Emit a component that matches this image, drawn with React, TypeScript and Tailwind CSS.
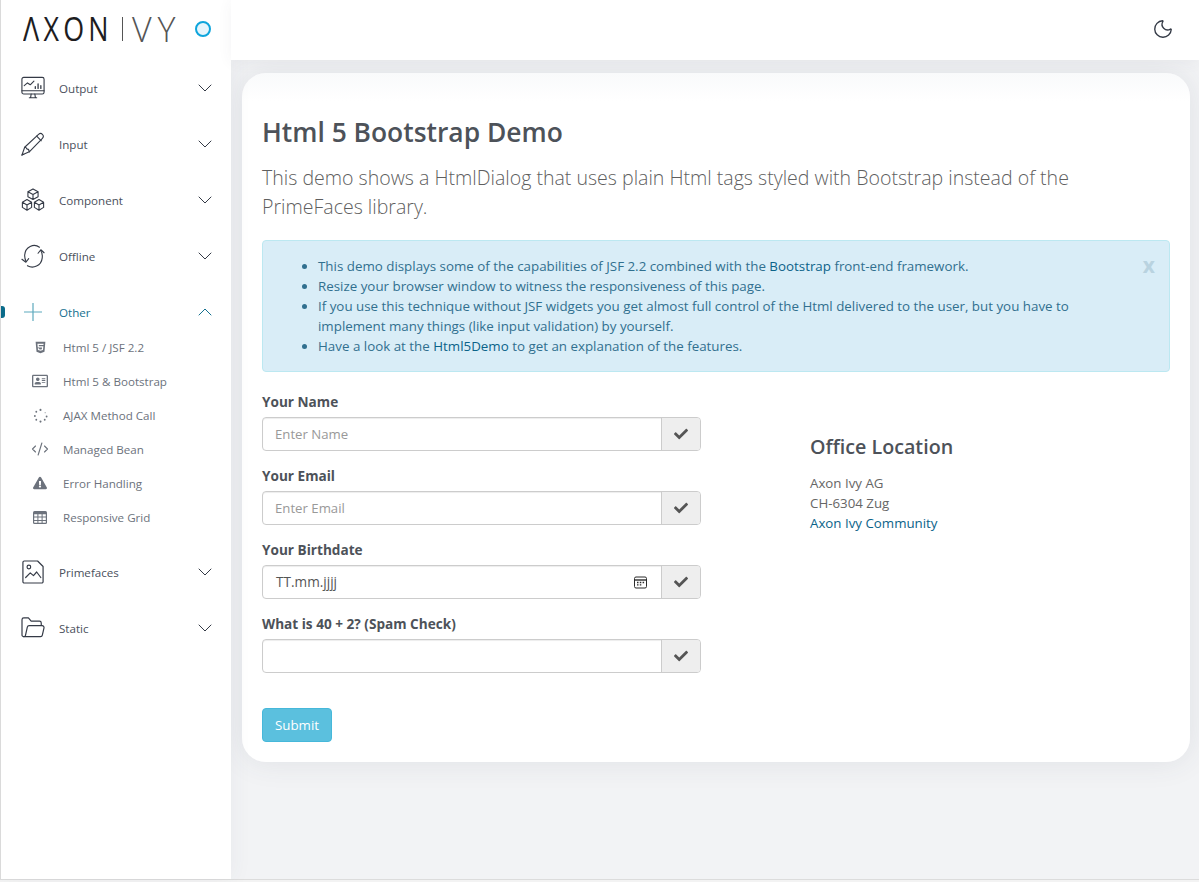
import React from "react";
import { ChevronDown, ChevronUp, CodeXml, Moon } from "lucide-react";
import { FaHtml5, FaRegAddressCard, FaExclamationTriangle, FaCheck } from "react-icons/fa";

/** Line icons of the sidebar */
const base = { fill: "none", stroke: "currentColor", strokeWidth: 1.2, strokeLinecap: "round", strokeLinejoin: "round" } as const;

const MonitorIcon = () => (
  <svg width="24" height="24" viewBox="0 0 26 26" {...base}>
    <rect x="1" y="1.5" width="24" height="18" rx="2" />
    <path d="M1 16h24M9 23.5h8M11 19.5l-.6 4M15 19.5l.6 4" />
    <path d="M3.5 10.5l3.5-3 3 2 4-4" />
    <path d="M15.5 13.5v-2M18.5 13.5v-5M21.5 13.5v-3" strokeWidth="1.4" />
  </svg>
);
const PencilIcon = () => (
  <svg width="24" height="24" viewBox="0 0 26 26" {...base}>
    <path d="M1 25l3-8.5L19 2.500c1.5-1.300 3-1.200 4.200 0 1.200 1.200 1.300 2.900 0 4.300L9 21.500z" />
    <path d="M17 4.500l5 5M4 16.500c1.500 0 2 .5 2.200 1.800 1.300 0 2.500.6 2.800 3.200M1 25l2-.8" />
  </svg>
);
const CubesIcon = () => (
  <svg width="24" height="24" viewBox="0 0 26 26" {...base}>
    <path d="M13 1l5.500 3v5.500L13 12.500 7.500 9.500V4zM7.500 4L13 7l5.500-3M13 7v5.500" />
    <path d="M6.500 12.500l5 3v5.500l-5 3-5-3v-5.500zM1.500 15.500l5 3 5-3M6.500 18.500v5.500" />
    <path d="M19.500 12.500l5 3v5.500l-5 3-5-3v-5.500zM14.500 15.500l5 3 5-3M19.500 18.500v5.500" />
  </svg>
);
const SyncIcon = () => (
  <svg width="24" height="24" viewBox="0 0 26 26" {...base}>
    <path d="M20 3.500C14-1 4.500 3 4 12c-.2 3 .5 5 1.500 7" />
    <path d="M1 16.500l4.300 3.300 3-4" />
    <path d="M7 23.500c6 3.500 15 .5 16-8.500.3-3-.3-6-1.600-8" />
    <path d="M25 9.500l-3.500-3.300-3 3.800" />
  </svg>
);
const PictureIcon = () => (
  <svg width="22" height="24" viewBox="0 0 24 26" {...base} strokeWidth="1.3" className="ml-px">
    <path d="M2.500 1h14.500l6 6v16.500a1.500 1.500 0 0 1-1.500 1.500h-19A1.500 1.500 0 0 1 1 23.500v-21A1.500 1.500 0 0 1 2.500 1z" />
    <circle cx="7.500" cy="7.500" r="2" />
    <path d="M4 19l5-5 3.500 3 3.500-4 4.500 6" />
  </svg>
);
const FolderIcon = () => (
  <svg width="24" height="22" viewBox="0 0 26 24" {...base} strokeWidth="1.3">
    <path d="M3 21.500A2 2 0 0 1 1 19.500V3a2 2 0 0 1 2-2h5l3 3.500h9a2 2 0 0 1 2 2v2.500" />
    <path d="M3 21.500c1 0 1.500-.5 1.800-1.500L6.800 11A2 2 0 0 1 8.800 9.500H23a2 2 0 0 1 2 2.400l-1.800 8A2 2 0 0 1 21.200 21.500z" />
  </svg>
);
const PlusIcon = () => (
  <svg width="18" height="18" viewBox="0 0 18 18" fill="none" stroke="#5da9bd" strokeWidth="1.2">
    <path d="M0 9h18M9 0v18" />
  </svg>
);
const SpinnerIcon = () => (
  <svg width="15" height="15" viewBox="0 0 16 16" fill="#6c727c">
    <circle cx="8" cy="2" r="1.1" />
    <circle cx="3.5" cy="4" r="1" />
    <circle cx="13" cy="5" r=".7" opacity=".6" />
    <circle cx="2" cy="8.500" r="1" />
    <circle cx="14.500" cy="9" r="1" />
    <circle cx="3.500" cy="12.500" r="1" />
    <circle cx="12.500" cy="12.500" r="1" />
    <circle cx="8" cy="14.500" r="1.1" />
  </svg>
);
const GridIcon = () => (
  <svg width="14" height="13" viewBox="0 0 14 13">
    <rect width="14" height="13" rx="1.5" fill="#6c727c" />
    <path d="M1.2 3.200h3.200v2.400H1.200zM5.400 3.200h3.200v2.400H5.400zM9.600 3.200h3.200v2.400H9.600zM1.200 6.600h3.200V9H1.200zM5.400 6.600h3.200V9H5.400zM9.600 6.600h3.200V9H9.600zM1.200 10h3.200v1.800H1.200zM5.400 10h3.200v1.800H5.400zM9.600 10h3.200v1.800H9.600z" fill="#fff" />
  </svg>
);
const CalendarIcon = () => (
  <svg width="13" height="13" viewBox="0 0 13 13" fill="none" stroke="#2b2b2b" strokeWidth="1">
    <rect x=".5" y="1" width="12" height="11" rx="1.5" />
    <path d="M.5 4h12" strokeWidth="1.4" />
    <path d="M3 6.500h1.500M5.800 6.500h1.500M8.600 6.500h1.500M3 8.900h1.500M5.800 8.900h1.500" strokeWidth="1.3" />
  </svg>
);

const Logo = () => (
  <div className="flex items-center pb-[2px] text-[32px] leading-none text-[#1d1d1f]">
    <span className="inline-block w-[90px] origin-left scale-x-[0.84] whitespace-nowrap tracking-[5px]">ΛXON</span>
    <span className="ml-[9px] h-[24px] w-px bg-[#555]" />
    <span className="ml-[9px] w-[55px] whitespace-nowrap text-[34px] font-light tracking-[6px] text-[#555]">VY</span>
    <span className="ml-[8px] h-[16px] w-[16px] rounded-full border-[2.5px] border-[#0ea5dc] bg-[#e6f5fc]" />
  </div>
);

type Group = { name: string; icon: React.ReactNode };

const NavGroup = ({ name, icon }: Group) => (
  <div className="flex h-[56px] items-center pl-[20px] pr-[14px]">
    <span className="flex w-[38px] shrink-0 items-center text-[#343a46]">{icon}</span>
    <span className="flex-1 pt-px text-[11.6px] text-[#4a505c]">{name}</span>
    <ChevronDown size={24} strokeWidth={1} className="text-[#343a46]" />
  </div>
);

const subItems: { name: string; icon: React.ReactNode }[] = [
  { name: "Html 5 / JSF 2.2", icon: <FaHtml5 size={13} /> },
  { name: "Html 5 & Bootstrap", icon: <FaRegAddressCard size={16} /> },
  { name: "AJAX Method Call", icon: <SpinnerIcon /> },
  { name: "Managed Bean", icon: <CodeXml size={18} strokeWidth={1.5} /> },
  { name: "Error Handling", icon: <FaExclamationTriangle size={14} /> },
  { name: "Responsive Grid", icon: <GridIcon /> },
];

const Sidebar = () => (
  <aside className="relative z-10 flex w-[231px] shrink-0 flex-col border-l border-[#dadada] bg-white shadow-[2px_0_20px_rgba(60,70,90,0.05)]">
    <div className="flex h-[60px] items-center pl-[22px]">
      <Logo />
    </div>
    <NavGroup name="Output" icon={<MonitorIcon />} />
    <NavGroup name="Input" icon={<PencilIcon />} />
    <NavGroup name="Component" icon={<CubesIcon />} />
    <NavGroup name="Offline" icon={<SyncIcon />} />
    <div className="relative flex h-[56px] items-center pl-[20px] pr-[14px]">
      <span className="absolute left-0 top-[22px] h-[12px] w-[4px] rounded-r-[3px] bg-[#0a6b8a]" />
      <span className="flex w-[38px] shrink-0 items-center pl-[3px]"><PlusIcon /></span>
      <span className="flex-1 pt-px text-[11.6px] text-[#14708f]">Other</span>
      <ChevronUp size={24} strokeWidth={1} className="text-[#14708f]" />
    </div>
    <div className="-mt-[10px] mb-[10px] flex flex-col">
      {subItems.map((s) => (
        <div key={s.name} className="flex h-[34px] items-center pl-[29px] text-[#6c727c]">
          <span className="flex w-[20px] shrink-0 justify-center">{s.icon}</span>
          <span className="ml-[13px] pt-px text-[11.6px]">{s.name}</span>
        </div>
      ))}
    </div>
    <NavGroup name="Primefaces" icon={<PictureIcon />} />
    <NavGroup name="Static" icon={<FolderIcon />} />
  </aside>
);

const Field = ({ label, placeholder, date }: { label: string; placeholder?: string; date?: boolean }) => (
  <div className="mb-[16px]">
    <div className="mb-[7px] text-[13.6px] font-bold leading-[17px] text-[#4d5259]">{label}</div>
    <div className="flex h-[34px] w-[439px] rounded-[4px] border border-[#ccc] shadow-[inset_0_1px_1px_rgba(0,0,0,0.075)]">
      <div className="flex flex-1 items-center justify-between pl-[12px] pr-[14px]">
        {date ? (
          <>
            <span className="pl-[1px] text-[13.6px] text-[#555]">TT.mm.jjjj</span>
            <CalendarIcon />
          </>
        ) : (
          <span className="pt-[2px] text-[13.2px] text-[#999]">{placeholder}</span>
        )}
      </div>
      <div className="flex w-[39px] items-center justify-center rounded-r-[3px] border-l border-[#ccc] bg-[#eee] text-[#555]">
        <FaCheck size={14} />
      </div>
    </div>
  </div>
);

const A = ({ children }: { children: React.ReactNode }) => <span className="text-[#0b6389]">{children}</span>;

const Card = () => (
  <main className="ml-[11px] mr-[9px] mt-[13px] h-[689px] rounded-[24px] bg-[linear-gradient(#f9fafb,#ffffff_28px)] px-[20px] shadow-[0_0_30px_rgba(60,70,90,0.1)]">
    <h1 className="pt-[41px] text-[26.4px] font-semibold leading-[36px] text-[#4d5259]">Html 5 Bootstrap Demo</h1>
    <p className="mt-[13px] text-[19.56px] font-light leading-[29px] text-[#5f5f5f]">
      This demo shows a HtmlDialog that uses plain Html tags styled with Bootstrap instead of the PrimeFaces library.
    </p>
    <div className="relative mt-[19px] h-[132px] rounded-[4px] border border-[#bce8f1] bg-[#d9edf7] pl-[55px] pr-[60px] pt-[15px] text-[13.35px] leading-[20px] text-[#31708f]">
      <span className="absolute right-[14px] top-[11px] text-[21px] font-bold leading-[27px] text-[#b9d3e0]">x</span>
      <ul className="list-disc">
        <li>This demo displays some of the capabilities of JSF 2.2 combined with the <A>Bootstrap</A> front-end framework.</li>
        <li>Resize your browser window to witness the responsiveness of this page.</li>
        <li>If you use this technique without JSF widgets you get almost full control of the Html delivered to the user, but you have to implement many things (like input validation) by yourself.</li>
        <li>Have a look at the <A>Html5Demo</A> to get an explanation of the features.</li>
      </ul>
    </div>
    <div className="mt-[21px] flex">
      <form className="w-[548px] shrink-0">
        <Field label="Your Name" placeholder="Enter Name" />
        <Field label="Your Email" placeholder="Enter Email" />
        <Field label="Your Birthdate" date />
        <Field label="What is 40 + 2? (Spam Check)" />
        <button type="button" className="mt-[19px] h-[34px] w-[70px] rounded-[4px] border border-[#46b8da] bg-[#5bc0de] pt-px text-[13.3px] text-white">Submit</button>
      </form>
      <div className="pt-[40px] text-[13.3px] leading-[20px] text-[#666]">
        <h2 className="mb-[12px] text-[19.7px] font-semibold leading-[28px] text-[#4d5259]">Office Location</h2>
        <div>Axon Ivy AG</div>
        <div>CH-6304 Zug</div>
        <A>Axon Ivy Community</A>
      </div>
    </div>
  </main>
);

export default function App() {
  return (
    <div className="h-[882px] bg-[#f3f3f3] font-['Open_Sans',sans-serif]">
      <div className="flex h-[880px] border-b border-[#dcdcdc] bg-[#f2f3f5]">
        <Sidebar />
        <div className="flex min-w-0 flex-1 flex-col">
          <header className="relative z-10 flex h-[60px] shrink-0 items-center justify-end bg-white pb-[2px] pr-[25px] shadow-[0_2px_14px_rgba(60,70,90,0.06)]">
            <Moon size={22} strokeWidth={1.5} className="text-[#343a46]" />
          </header>
          <Card />
        </div>
      </div>
    </div>
  );
}
